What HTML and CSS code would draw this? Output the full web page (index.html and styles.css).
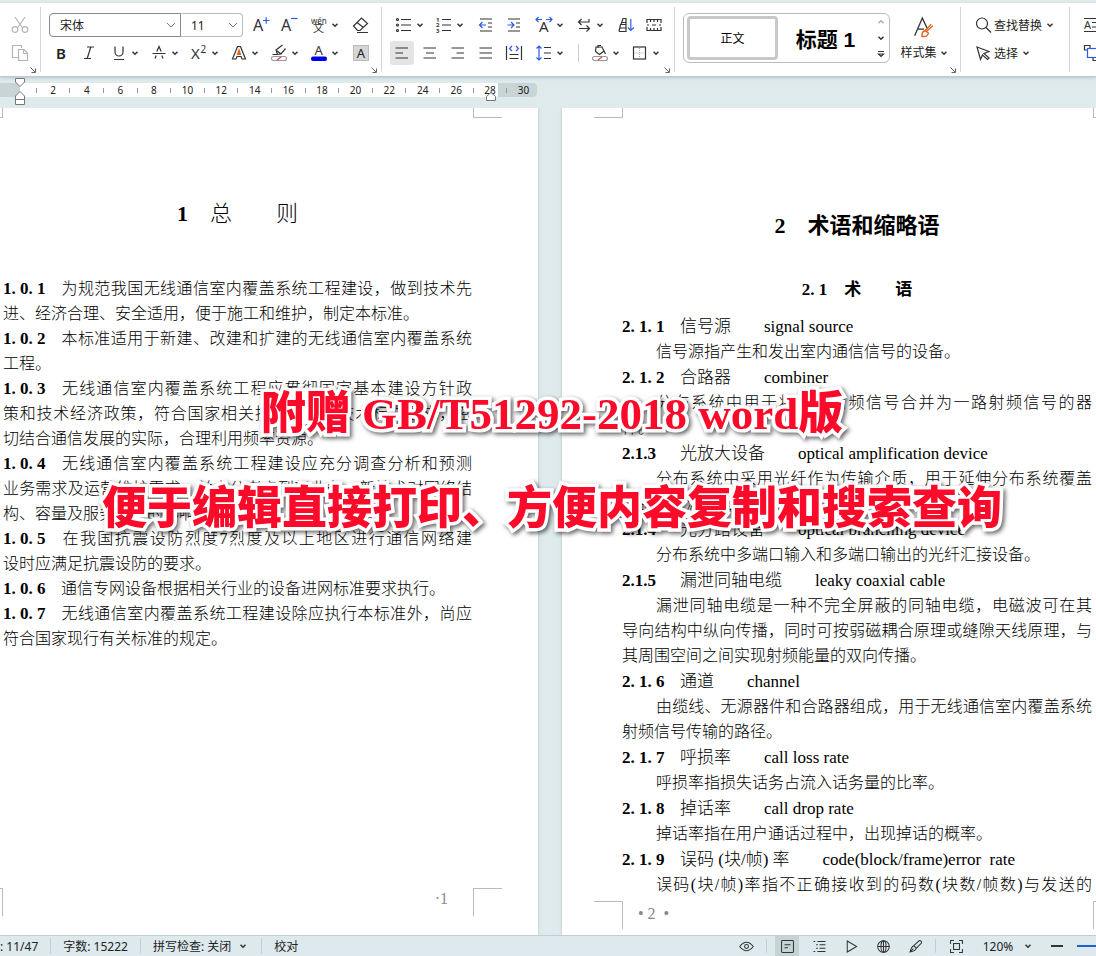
FILE: index.html
```html
<!DOCTYPE html>
<html lang="zh-CN">
<head>
  <meta charset="UTF-8">
  <meta name="viewport" content="width=device-width, initial-scale=1.0">
  <title>GB/T51292-2018</title>
  <link rel="stylesheet" href="styles.css">
</head>
<body>
  <svg class="defs" width="0" height="0" aria-hidden="true">
    <symbol id="caret" viewBox="0 0 8 8"><path d="M1.5 2.8 L4 5.2 L6.5 2.8" fill="none" stroke="#333" stroke-width="1.5"/></symbol>
    <symbol id="chevron" viewBox="0 0 10 8"><path d="M1 2 L5 6 L9 2" fill="none" stroke="#777" stroke-width="1"/></symbol>
    <symbol id="launcher" viewBox="0 0 6 6"><path d="M.5 .5 L5 5 M5.5 1.5 V5.5 H1.5" fill="none" stroke="#666" stroke-width="1"/></symbol>
  </svg>

  <header class="ribbon">
    <!-- clipboard -->
    <div class="group clipboard">
      <div class="row"><button class="btn" title="剪切"><svg class="icon dim" viewBox="0 0 20 20"><path d="M5 2 L12.5 13 M15 2 L7.5 13"/><circle cx="5" cy="14.5" r="2.8"/><circle cx="15" cy="14.5" r="2.8"/></svg></button></div>
      <div class="row"><button class="btn" title="复制"><svg class="icon dim" viewBox="0 0 20 20"><path d="M8 14.5 H2.5 V2.5 H11.5 V5"/><path d="M8.5 6.5 H14 L17.5 10 V17.5 H8.5 Z M13.5 6.5 V10.5 H17.5"/></svg></button></div>
      <svg class="launcher"><use href="#launcher"/></svg>
    </div>

    <!-- font -->
    <div class="group font">
      <div class="row">
        <label class="combo family"><select aria-label="字体"><option>宋体</option></select><svg class="chevron"><use href="#chevron"/></svg></label>
        <label class="combo size"><select aria-label="字号"><option>11</option></select><svg class="chevron"><use href="#chevron"/></svg></label>
        <button class="btn" title="增大字号"><svg class="icon" viewBox="0 0 20 20"><text x="2" y="16" font-size="16">A</text><path class="blue" d="M12 5.5 H18.5 M15.2 2.2 V8.8"/></svg></button>
        <button class="btn" title="减小字号"><svg class="icon" viewBox="0 0 20 20"><text x="2" y="16" font-size="16">A</text><path class="blue" d="M12 3.5 H18.5"/></svg></button>
        <button class="btn split" title="拼音指南"><svg class="icon" viewBox="0 0 20 20"><text x="2" y="9" font-size="8">wén</text><text x="4" y="17" font-size="11">文</text></svg><svg class="caret"><use href="#caret"/></svg></button>
        <button class="btn push" title="清除格式"><svg class="icon" viewBox="0 0 20 20"><path d="M2.5 11 L10.5 3 L16.5 8.5 L9 15.5 H6.5 Z M6 7.5 L12.5 12.5 M6 17.5 H17"/></svg></button>
      </div>
      <div class="row">
        <button class="btn" title="加粗"><span class="glyph bold">B</span></button>
        <button class="btn" title="倾斜"><svg class="icon" viewBox="0 0 20 20"><path d="M8 4 H15 M5 15.5 H12 M11.8 4 L8.2 15.5"/></svg></button>
        <button class="btn split" title="下划线"><svg class="icon" viewBox="0 0 20 20"><path d="M6 3.5 V9 a4 4 0 0 0 8 0 V3.5 M5 16.5 H15"/></svg><svg class="caret"><use href="#caret"/></svg></button>
        <button class="btn split" title="删除线"><svg class="icon" viewBox="0 0 20 20"><path d="M6 15.5 L7.2 12.5 M7.8 8.5 L10 3.5 L12.2 8.5 M12.8 12.5 L14 15.5 M3.5 10.5 H16.5"/></svg><svg class="caret"><use href="#caret"/></svg></button>
        <button class="btn split" title="上标"><svg class="icon" viewBox="0 0 20 20"><text x="2" y="15.5" font-size="15">X</text><text x="11.5" y="10" font-size="10">2</text></svg><svg class="caret"><use href="#caret"/></svg></button>
        <button class="btn split" title="文字效果"><svg class="icon" viewBox="0 0 20 20"><path d="M8.5 3.5 H11.5 L16.5 16 H13 L12 13.5 H8 L7 16 H3.5 Z"/><path class="orange" d="M8.5 11.5 L10 7 L11.5 11.5 Z"/></svg><svg class="caret"><use href="#caret"/></svg></button>
        <button class="btn split" title="突出显示"><svg class="icon" viewBox="0 0 20 20"><path d="M3.5 11.5 H8.5 L12 11 L16.5 5.5 M8.5 11.5 L7 7 L13.5 2 M7 7 L12 11"/><rect class="swatch" x="2.5" y="13.5" width="15" height="4" rx="2"/><path class="red" d="M8 17 L12 14"/></svg><svg class="caret"><use href="#caret"/></svg></button>
        <button class="btn split" title="字体颜色"><svg class="icon" viewBox="0 0 20 20"><text x="5.5" y="12" font-size="13">A</text><rect class="ink" x="2" y="13.5" width="16" height="4.5" rx="2"/></svg><svg class="caret"><use href="#caret"/></svg></button>
        <button class="btn push" title="字符底纹"><span class="glyph shaded">A</span></button>
      </div>
      <svg class="launcher"><use href="#launcher"/></svg>
    </div>

    <!-- paragraph -->
    <div class="group paragraph">
      <div class="row">
        <button class="btn split" title="项目符号"><svg class="icon" viewBox="0 0 20 20"><path d="M7 4.5 H17 M7 10 H17 M7 15.5 H17"/><circle cx="3.5" cy="4.5" r="1"/><circle cx="3.5" cy="10" r="1"/><circle cx="3.5" cy="15.5" r="1"/></svg><svg class="caret"><use href="#caret"/></svg></button>
        <button class="btn split" title="编号"><svg class="icon bold-text" viewBox="0 0 20 20"><path d="M8 4.5 H17 M8 10 H17 M8 15.5 H17"/><text x="2" y="6.5" font-size="6">1</text><text x="2" y="12" font-size="6">2</text><text x="2" y="17.5" font-size="6">3</text></svg><svg class="caret"><use href="#caret"/></svg></button>
        <button class="btn push" title="减少缩进"><svg class="icon" viewBox="0 0 20 20"><path d="M4 4 H16 M12 8 H16 M12 12 H16 M4 16 H16"/><path class="blue" d="M10 10 H3.5 M6.5 7 L3.5 10 L6.5 13"/></svg></button>
        <button class="btn" title="增加缩进"><svg class="icon" viewBox="0 0 20 20"><path d="M4 4 H16 M12 8 H16 M12 12 H16 M4 16 H16"/><path class="blue" d="M3.5 10 H10 M7 7 L10 10 L7 13"/></svg></button>
        <button class="btn split" title="中文版式"><svg class="icon" viewBox="0 0 20 20"><text x="5" y="16.5" font-size="15">A</text><path class="blue" d="M2 4.5 H8 M4.5 2 L2 4.5 L4.5 7 M12 4.5 H18 M15.5 2 L18 4.5 L15.5 7"/></svg><svg class="caret"><use href="#caret"/></svg></button>
        <button class="btn split" title="换行"><svg class="icon" viewBox="0 0 20 20"><path d="M15 4 V7 H4.5 M7.5 4 L4.5 7 L7.5 10 M5 13.5 H15.5 M12.5 10.5 L15.5 13.5 L12.5 16.5"/></svg><svg class="caret"><use href="#caret"/></svg></button>
        <button class="btn push" title="排序"><svg class="icon" viewBox="0 0 20 20"><path d="M5 9.5 L7 3.5 H10 V9.5 M5 7.5 H10 M3 16.5 L4.5 9.5 H10 V16.5 H3 M4 13 H10"/><path class="blue" d="M14.8 4 V15.5 M11.8 12.5 L14.8 15.5 L17.8 12.5"/></svg></button>
        <button class="btn" title="显示标记"><svg class="icon" viewBox="0 0 20 20"><path d="M3 8 V4.5 H17 V8 M3 12 V15.5 H17 V12 M6.5 4.5 V7 M10 4.5 V7 M13.5 4.5 V7 M6.5 15.5 V13 M10 15.5 V13 M13.5 15.5 V13 M3 10 H5 M8 10 H12 M15 10 H17"/></svg></button>
      </div>
      <div class="row">
        <button class="btn active" title="左对齐"><svg class="icon" viewBox="0 0 20 20"><path d="M3.5 5 H16 M3.5 10 H11 M3.5 15 H16"/></svg></button>
        <button class="btn" title="居中"><svg class="icon" viewBox="0 0 20 20"><path d="M3.5 5 H16 M6 10 H14 M3.5 15 H16"/></svg></button>
        <button class="btn" title="右对齐"><svg class="icon" viewBox="0 0 20 20"><path d="M3.5 5 H16 M8.5 10 H16 M3.5 15 H16"/></svg></button>
        <button class="btn" title="两端对齐"><svg class="icon" viewBox="0 0 20 20"><path d="M3.5 5 H16 M3.5 10 H16 M3.5 15 H16"/></svg></button>
        <button class="btn" title="分散对齐"><svg class="icon" viewBox="0 0 20 20"><path d="M2.5 3 V17 M17.5 3 V17 M5.5 11.5 H14.5 M5.5 15.5 H14.5"/><path class="blue" d="M8 3 L5.5 5.5 L8 8 M12 3 L14.5 5.5 L12 8"/></svg></button>
        <button class="btn split" title="行距"><svg class="icon" viewBox="0 0 20 20"><path d="M10 4.5 H17 M10 10 H17 M10 15.5 H17"/><path class="blue" d="M5 3 V17 M2.5 5.5 L5 3 L7.5 5.5 M2.5 14.5 L5 17 L7.5 14.5"/></svg><svg class="caret"><use href="#caret"/></svg></button>
        <span class="bar"></span>
        <button class="btn split" title="底纹颜色"><svg class="icon" viewBox="0 0 20 20"><path d="M6 4 H12 L14 8 L9.5 11.5 L5.5 8.5 Z M8 5 V2.5 H11 M14 8 L15.5 11"/><rect class="swatch" x="2.5" y="13.5" width="15" height="4" rx="2"/><path class="red" d="M8 17 L12 14"/></svg><svg class="caret"><use href="#caret"/></svg></button>
        <button class="btn split" title="边框"><svg class="icon" viewBox="0 0 20 20"><rect x="3.5" y="4" width="12" height="12"/><path class="dots" d="M9.5 5 V15 M4.5 10 H14.5"/></svg><svg class="caret"><use href="#caret"/></svg></button>
      </div>
      <svg class="launcher"><use href="#launcher"/></svg>
    </div>

    <!-- styles -->
    <div class="group styles">
      <div class="gallery">
        <button class="style-item selected">正文</button>
        <button class="style-item heading">标题 1</button>
        <div class="scroller">
          <svg class="caret up"><use href="#caret"/></svg>
          <svg class="caret"><use href="#caret"/></svg>
          <svg class="caret" viewBox="0 0 8 8"><path d="M1 1.5 H7 M1.5 4 L4 6.5 L6.5 4 Z" fill="none" stroke="#333" stroke-width="1.2"/></svg>
        </div>
      </div>
      <button class="style-set">
        <svg class="icon big" viewBox="0 0 20 20"><path d="M1.5 17 L8.5 1 L13 10.5 M4 11 H10"/><path class="orange-line" d="M18 8 L12.5 13 M16.5 6.5 L11 12.5 M11 12.5 Q8 13 8 17.5 Q13.5 18.5 14 14.5 Z"/></svg>
        <span class="caption">样式集<svg class="caret"><use href="#caret"/></svg></span>
      </button>
      <svg class="launcher"><use href="#launcher"/></svg>
    </div>

    <!-- editing -->
    <div class="group editing">
      <div class="row"><button class="text-btn"><svg class="icon" viewBox="0 0 20 20"><circle cx="8" cy="8.5" r="5.5"/><path d="M12 12.5 L17 17.5"/></svg>查找替换<svg class="caret"><use href="#caret"/></svg></button></div>
      <div class="row"><button class="text-btn"><svg class="icon" viewBox="0 0 20 20"><path d="M3 4 L15 8.5 L10 10.5 L15 15 L13.5 16.5 L8.5 12 L6.5 16.5 Z"/></svg>选择<svg class="caret"><use href="#caret"/></svg></button></div>
    </div>

    <div class="group more">
      <div class="row"><button class="btn" title="排版"><svg class="icon" viewBox="0 0 20 20"><path d="M4 3.5 H18 M4 16.5 H18 M12 7.5 H17 M12 12 H17"/><text x="4" y="14" font-size="11">A</text></svg></button></div>
      <div class="row"><button class="btn" title="排列"><svg class="icon" viewBox="0 0 20 20"><path d="M7 7 H4.5 V2.5 H10 V5 M13 15 V17.5 H19 V10"/><rect class="blue" x="7.5" y="5.5" width="12" height="9"/></svg></button></div>
    </div>
  </header>

  <div class="ruler-area">
    <div class="ruler">
      <i></i><b>2</b><i></i><b>4</b><i></i><b>6</b><i></i><b>8</b><i></i><b>10</b><i></i><b>12</b><i></i><b>14</b><i></i><b>16</b><i></i><b>18</b><i></i><b>20</b><i></i><b>22</b><i></i><b>24</b><i></i><b>26</b><i></i><b>28</b><i></i><b>30</b>
      <svg class="marker left" viewBox="0 0 10 30"><path d="M.5 1.5 H9.5 V5 L5 9.5 L.5 5 Z M5 14.5 L9.5 19 V27.5 H.5 V19 Z M.5 22.5 H9.5"/></svg>
      <svg class="marker right" viewBox="0 0 10 10"><path d="M5 .5 L9.5 4.5 V8.5 H.5 V4.5 Z"/></svg>
    </div>
  </div>

  <main class="workspace">
    <article class="page first">
      <h1 class="light-title"><b>1</b>　总　　则</h1>
      <p><span class="full"><b class="no">1. 0. 1</b>为规范我国无线通信室内覆盖系统工程建设，做到技术先</span>进、经济合理、安全适用，便于施工和维护，制定本标准。</p>
      <p><span class="full"><b class="no">1. 0. 2</b>本标准适用于新建、改建和扩建的无线通信室内覆盖系统</span>工程。</p>
      <p><span class="full"><b class="no">1. 0. 3</b>无线通信室内覆盖系统工程应贯彻国家基本建设方针政</span><span class="full">策和技术经济政策，符合国家相关技术体制和技术标准要求，密</span>切结合通信发展的实际，合理利用频率资源。</p>
      <p><span class="full"><b class="no">1. 0. 4</b>无线通信室内覆盖系统工程建设应充分调查分析和预测</span><span class="full">业务需求及运营维护需求，并充分考虑到新业务、新技术对网络结</span>构、容量及服务质量的影响。</p>
      <p><span class="full"><b class="no">1. 0. 5</b>在我国抗震设防烈度7烈度及以上地区进行通信网络建</span>设时应满足抗震设防的要求。</p>
      <p><b class="no">1. 0. 6</b>通信专网设备根据相关行业的设备进网标准要求执行。</p>
      <p><span class="full"><b class="no">1. 0. 7</b>无线通信室内覆盖系统工程建设除应执行本标准外，尚应</span>符合国家现行有关标准的规定。</p>
      <span class="crop tl"></span><span class="crop tr"></span><span class="crop bl"></span><span class="crop br"></span>
      <span class="folio">·1</span>
    </article>

    <article class="page second">
      <h1>2　术语和缩略语</h1>
      <h2>2. 1　术　　语</h2>
      <h3><b class="no">2. 1. 1</b>信号源<span class="en">signal source</span></h3>
      <p class="indent">信号源指产生和发出室内通信信号的设备。</p>
      <h3><b class="no">2. 1. 2</b>合路器<span class="en">combiner</span></h3>
      <p><span class="full indent">分布系统中用于将多路射频信号合并为一路射频信号的器</span>件。</p>
      <h3><b class="no">2.1.3</b>光放大设备<span class="en">optical amplification device</span></h3>
      <p><span class="full indent">分布系统中采用光纤作为传输介质，用于延伸分布系统覆盖</span>范围的有源设备。</p>
      <h3><b class="no">2.1.4</b>光分路设备<span class="en">optical branching device</span></h3>
      <p class="indent">分布系统中多端口输入和多端口输出的光纤汇接设备。</p>
      <h3><b class="no">2.1.5</b>漏泄同轴电缆<span class="en">leaky coaxial cable</span></h3>
      <p><span class="full indent">漏泄同轴电缆是一种不完全屏蔽的同轴电缆，电磁波可在其</span><span class="full">导向结构中纵向传播，同时可按弱磁耦合原理或缝隙天线原理，与</span>其周围空间之间实现射频能量的双向传播。</p>
      <h3><b class="no">2. 1. 6</b>通道<span class="en">channel</span></h3>
      <p><span class="full indent">由缆线、无源器件和合路器组成，用于无线通信室内覆盖系统</span>射频信号传输的路径。</p>
      <h3><b class="no">2. 1. 7</b>呼损率<span class="en">call loss rate</span></h3>
      <p class="indent">呼损率指损失话务占流入话务量的比率。</p>
      <h3><b class="no">2. 1. 8</b>掉话率<span class="en">call drop rate</span></h3>
      <p class="indent">掉话率指在用户通话过程中，出现掉话的概率。</p>
      <h3><b class="no">2. 1. 9</b>误码 (块/帧) 率<span class="en">code(block/frame)error&nbsp; rate</span></h3>
      <p><span class="full indent">误码(块/帧)率指不正确接收到的码数(块数/帧数)与发送的</span></p>
      <span class="crop tl"></span><span class="crop tr"></span><span class="crop bl"></span><span class="crop br"></span>
      <span class="folio">• 2 &nbsp;•</span>
    </article>

    <div class="banner">
      <div>附赠 GB/T51292-2018 word版</div>
      <div>便于编辑直接打印、方便内容复制和搜索查询</div>
    </div>
  </main>

  <footer class="status">
    <span class="cell pages">: 11/47</span>
    <span class="cell">字数: 15222</span>
    <button class="cell spell">拼写检查: 关闭<svg class="caret"><use href="#caret"/></svg></button>
    <button class="cell">校对</button>
    <div class="views">
      <button title="护眼模式"><svg class="icon" viewBox="0 0 20 20"><path d="M2 10 Q10 0 18 10 Q10 20 2 10 Z"/><circle cx="10" cy="10" r="2.3"/></svg></button>
      <span class="sep"></span>
      <button class="on" title="页面视图"><svg class="icon" viewBox="0 0 20 20"><rect x="3" y="3" width="14" height="14" rx="1"/><path d="M6.5 8 H13.5 M6.5 11.5 H10.5"/></svg></button>
      <button title="大纲"><svg class="icon" viewBox="0 0 20 20"><path d="M3 4 H5 M7.5 4 H17 M6 8 H8 M10 8 H17 M6 12 H8 M10 12 H17 M3 16 H5 M7.5 16 H17"/></svg></button>
      <button title="阅读"><svg class="icon" viewBox="0 0 20 20"><path d="M5 3.5 L16 10 L5 16.5 Z"/></svg></button>
      <button title="Web版式"><svg class="icon" viewBox="0 0 20 20"><circle cx="10" cy="10" r="6.8"/><ellipse cx="10" cy="10" rx="3" ry="6.8"/><path d="M3.2 10 H16.8 M10 3.2 V16.8"/></svg></button>
      <button title="写作模式"><svg class="icon" viewBox="0 0 20 20"><path d="M8 9 L14.5 3 Q17.5 3 17 6 L11 12 Z M8 9 Q5 10 3.5 16.5 Q10 15.5 11 12 M3.5 16.5 L7.5 12.5"/></svg></button>
      <span class="sep"></span>
      <button title="最佳显示"><svg class="icon" viewBox="0 0 20 20"><path d="M3 7 V3 H7 M13 3 H17 V7 M17 13 V17 H13 M7 17 H3 V13"/><rect x="6.5" y="6.5" width="7" height="7"/></svg></button>
      <button class="zoom">120%<svg class="caret"><use href="#caret"/></svg></button>
      <button class="minus" title="缩小"></button>
      <span class="track"></span>
    </div>
  </footer>
</body>
</html>
```

FILE: styles.css
```css
* {
  box-sizing: border-box;
}
body {
  margin: 0;
  height: 100vh;
  display: flex;
  flex-direction: column;
  overflow: hidden;
  background-color: #dfeaec;
  font-family: "Noto Sans", "Noto Sans CJK SC", sans-serif;
  font-size: 12px;
  color: #222;
}
button {
  border: 0;
  padding: 0;
  background: none;
  font: inherit;
  color: inherit;
}
.defs {
  position: absolute;
}

/* ribbon */
.ribbon {
  display: flex;
  flex: none;
  height: 74px;
  margin-top: 3px;
  background: #fff;
  border-bottom: 1px solid #bccacd;
  box-shadow: 0 1px 3px #b8c6ca;
  overflow: hidden;
}
.group {
  position: relative;
  flex: none;
  display: flex;
  flex-direction: column;
  padding: 8px 6px 0;
}
.group::after {
  content: "";
  position: absolute;
  right: 0;
  top: 4px;
  bottom: 4px;
  width: 1px;
  background: #d5d5d5;
}
.row {
  display: flex;
  align-items: center;
  height: 28px;
}
.clipboard {
  width: 41px;
}
.font {
  width: 341px;
}
.paragraph {
  width: 293px;
}
.btn {
  flex: none;
  display: flex;
  align-items: center;
  justify-content: center;
  width: 28px;
  height: 24px;
}
.btn.split {
  width: 40px;
}
.btn.push {
  margin-left: 4px;
}
.btn.active {
  width: 24px;
  margin: 0 2px;
  background: #e4e4e4;
  border-radius: 3px;
}
.icon {
  flex: none;
  width: 20px;
  height: 20px;
  margin: 0 2px;
  fill: none;
  stroke: #333;
  stroke-width: 1.2;
  overflow: visible;
}
.icon text {
  fill: #333;
  stroke: none;
}
.icon.bold-text text {
  font-weight: 700;
}
.icon.dim {
  stroke: #b5b5b5;
}
.icon .blue {
  stroke: #2a5bea;
}
.icon .orange {
  fill: #e0601c;
  stroke: #e0601c;
}
.icon .orange-line {
  stroke: #e0601c;
}
.icon .red {
  stroke: #e04040;
}
.icon .swatch {
  stroke: #999;
}
.icon .ink {
  fill: #0000e6;
  stroke: none;
}
.icon .dots {
  stroke: #aaa;
  stroke-dasharray: 1 1;
}
.caret {
  flex: none;
  width: 8px;
  height: 8px;
}
.launcher {
  position: absolute;
  right: 5px;
  bottom: 3px;
  width: 6px;
  height: 6px;
}
.glyph {
  font-size: 15px;
  line-height: 16px;
}
.glyph.bold {
  font-weight: 600;
}
.glyph.shaded {
  width: 16px;
  background: #d6d6d6;
  border: 1px solid #bbb;
  font-size: 13px;
  line-height: 14px;
}
.bar {
  width: 1px;
  height: 18px;
  margin: 0 5px 0 10px;
  background: #ccc;
}
.combo {
  position: relative;
  height: 24px;
}
.combo select {
  width: 100%;
  height: 100%;
  padding: 0 10px;
  appearance: none;
  background: #fff;
  border: 1px solid #8a8a8a;
  font: inherit;
  color: #222;
}
.combo .chevron {
  position: absolute;
  right: 5px;
  top: 8px;
  width: 10px;
  height: 8px;
}
.family {
  width: 132px;
  margin-left: 2px;
}
.family select {
  border-radius: 4px 0 0 4px;
}
.size {
  width: 62px;
  margin-right: 4px;
}
.size select {
  border-color: #bbb;
  border-left: 0;
  border-radius: 0 4px 4px 0;
}

.group.styles {
  flex-direction: row;
  width: 286px;
  padding: 10px 8px 0;
}
.gallery {
  display: flex;
  width: 207px;
  height: 50px;
  padding: 2px 0 2px 3px;
  border: 1px solid #bbb;
  border-radius: 6px;
}
.style-item {
  width: 91px;
  height: 44px;
}
.style-item.selected {
  border: 3px solid #c8c8c8;
  border-radius: 4px;
  color: #000;
}
.style-item.heading {
  flex: 1;
  font: 700 21px "Liberation Sans", "Noto Sans CJK SC", sans-serif;
  color: #000;
  white-space: nowrap;
}
.scroller {
  display: flex;
  flex-direction: column;
  justify-content: space-between;
  align-items: center;
  width: 16px;
  padding: 2px 0;
}
.scroller .up {
  transform: rotate(180deg);
  opacity: .4;
}
.style-set {
  display: flex;
  flex-direction: column;
  align-items: center;
  width: 48px;
  height: 52px;
  margin-left: 10px;
}
.icon.big {
  width: 22px;
  height: 22px;
  margin: 4px 0 6px;
}
.caption {
  display: flex;
  align-items: center;
  gap: 3px;
  line-height: 16px;
  white-space: nowrap;
}
.editing {
  width: 109px;
  padding-left: 12px;
}
.text-btn {
  display: flex;
  align-items: center;
  white-space: nowrap;
}
.text-btn .icon {
  margin: 0 0 0 1px;
}
.text-btn .caret {
  margin-left: 4px;
}

/* ruler */
.ruler-area {
  flex: none;
  height: 31px;
  padding-top: 6px;
}
.ruler {
  position: relative;
  display: flex;
  align-items: center;
  width: 537px;
  height: 14px;
  padding: 0 5px 0 28px;
  border-radius: 0 4px 4px 0;
  background: linear-gradient(to right, #c9d4d6 20px, #fff 20px, #fff 498px, #c9d4d6 498px);
}
.ruler b {
  flex: 1 1 0;
  width: 0;
  display: flex;
  justify-content: center;
  font-size: 10px;
  font-weight: 400;
}
.ruler i {
  flex: 1 1 0;
  height: 5px;
  background: linear-gradient(#999, #999) center / 1px 5px no-repeat;
}
.marker {
  position: absolute;
  fill: #fff;
  stroke: #777;
}
.marker.left {
  left: 15px;
  top: -6px;
  width: 10px;
  height: 30px;
}
.marker.right {
  left: 486px;
  top: 9px;
  width: 10px;
  height: 10px;
}

/* document */
.workspace {
  position: relative;
  flex: 1;
  min-height: 0;
  display: grid;
  grid-template-columns: 538fr 534fr;
  gap: 24px;
  overflow: hidden;
}
.page {
  position: relative;
  min-width: 0;
  background: #fff;
  box-shadow: 0 0 3px #b4c2c5;
  font-family: "Liberation Serif", "Noto Sans CJK SC", serif;
  font-size: 16px;
  font-weight: 300;
  line-height: 25px;
  color: #000;
}
.first {
  padding: 91px 66px 0 3px;
}
.second {
  padding: 103px 4px 0 60px;
}
.page h1 {
  margin: 0 0 36px;
  font-size: 22px;
  line-height: 30px;
  text-align: center;
}
.page .light-title {
  margin-bottom: 47px;
  font-weight: 300;
}
.light-title b {
  font-weight: 700;
}
.page h2 {
  margin: 0 0 12px;
  font-size: 17px;
  line-height: 25px;
  text-align: center;
}
.page h3 {
  margin: 1px 0 0;
  font-size: 17px;
  font-weight: 300;
  line-height: 25px;
  white-space: nowrap;
}
.page p {
  margin: 0;
  white-space: nowrap;
}
.full {
  display: block;
  text-align: justify;
  text-align-last: justify;
}
.indent {
  text-indent: 34px;
}
.no {
  display: inline-block;
  width: 58px;
  font-size: 17px;
  font-weight: 700;
  line-height: 24px;
  text-align: left;
  text-align-last: left;
  text-indent: 0;
}
.en {
  margin-left: 33px;
}
.folio {
  position: absolute;
  color: #888;
}
.first .folio {
  right: 90px;
  bottom: 24px;
}
.second .folio {
  left: 76px;
  bottom: 9px;
}

/* margin corners */
.crop {
  position: absolute;
  width: 29px;
  height: 28px;
  border: 0 solid #bbb;
}
.crop.tl, .crop.tr {
  top: 0;
  height: 10px;
  border-bottom-width: 1px;
}
.crop.bl, .crop.br {
  bottom: 19px;
  border-top-width: 1px;
}
.second .crop.bl, .second .crop.br {
  bottom: 6px;
}
.crop.tl, .crop.bl {
  border-right-width: 1px;
}
.crop.tr, .crop.br {
  border-left-width: 1px;
}
.first .tl, .first .bl {
  left: 0;
  width: 3px;
}
.first .tr, .first .br {
  right: 36px;
}
.second .tl, .second .bl {
  left: 32px;
}
.second .tr, .second .br {
  right: 0;
  width: 3px;
}

/* red banner over both pages */
.banner {
  position: absolute;
  left: 0;
  right: 0;
  top: 259px;
  padding-left: 8px;
  font-family: "Liberation Serif", "Noto Sans CJK SC", serif;
  font-size: 45px;
  font-weight: 900;
  line-height: 95px;
  text-align: center;
  white-space: nowrap;
  color: #fb0a2a;
  -webkit-text-stroke: 7px #fff;
  paint-order: stroke fill;
  stroke-linejoin: round;
  filter: drop-shadow(2px 2px 2px rgba(0, 0, 0, 0.6));
}

/* status bar */
.status {
  display: flex;
  align-items: center;
  flex: none;
  height: 21px;
  background: #dde9ed;
  border-top: 1px solid #c2cfd2;
  white-space: nowrap;
}
.cell {
  display: flex;
  align-items: center;
  height: 16px;
  padding: 0 12px;
  border-right: 1px solid #c2cfd2;
}
.cell.pages {
  padding-left: 0;
}
.cell.spell {
  gap: 8px;
  padding-right: 14px;
}
button.cell:not(.spell) {
  border-right: 0;
}
.views {
  display: flex;
  align-items: center;
  height: 20px;
  margin-left: auto;
}
.views button {
  display: flex;
  align-items: center;
  justify-content: center;
  width: 32px;
  height: 20px;
}
.views .icon {
  width: 17px;
  height: 17px;
}
.views .on {
  width: 24px;
  margin: 0 4px;
  background: #c6d3d5;
}
.sep {
  width: 1px;
  height: 14px;
  margin: 0 4px;
  background: #c2cfd2;
}
.views .zoom {
  width: 71px;
  gap: 11px;
}
.views .minus {
  width: 12px;
  height: 2px;
  margin: 0 14px 0 8px;
  background: #333;
}
.track {
  width: 19px;
  height: 2px;
  background: #1f5fd0;
}
```
